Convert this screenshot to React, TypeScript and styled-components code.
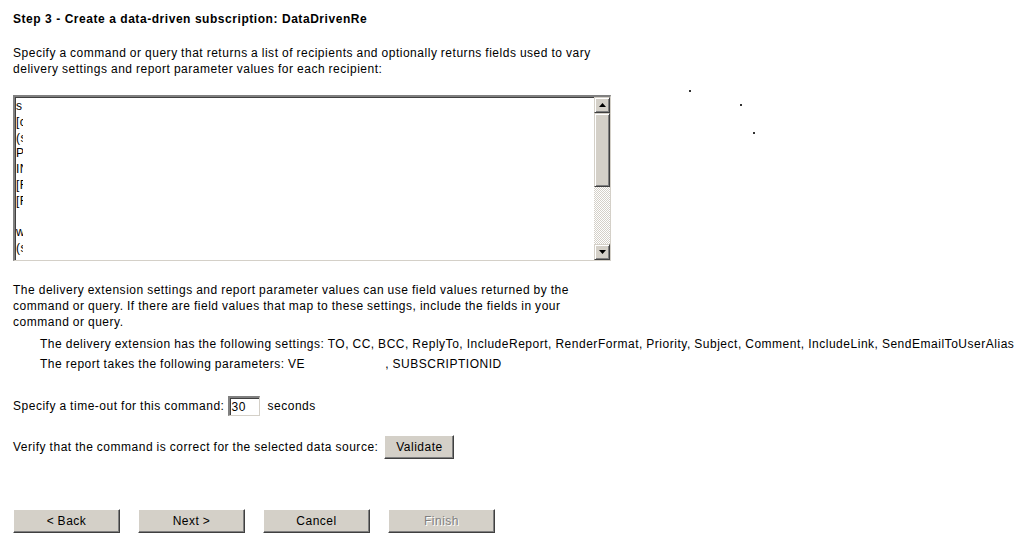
import styled, { createGlobalStyle } from "styled-components";

const GlobalStyle = createGlobalStyle`
  body {
    margin: 0;
    background: #ffffff;
    font-family: "Liberation Sans", Arial, sans-serif;
    font-size: 12px;
    letter-spacing: 0.52px;
    word-spacing: -0.4px;
    color: #000000;
  }
`;

const Page = styled.div`
  position: relative;
  width: 1026px;
  height: 538px;
  padding: 11px 0 0 13px;
  box-sizing: border-box;
  overflow: hidden;
`;

const Title = styled.h1`
  margin: 0;
  font-size: 12px;
  font-weight: bold;
  letter-spacing: 0.55px;
  word-spacing: 0;
  line-height: 16px;
`;

const Para = styled.p<{ $top: number }>`
  margin: ${(p) => p.$top}px 0 0;
  line-height: 16px;
  width: 590px;
`;

const QueryBox = styled.div`
  margin-top: 18px;
  width: 598px;
  height: 166px;
  box-sizing: border-box;
  border-style: solid;
  border-width: 2px 1px 1px 2px;
  border-color: #808080 #d4d0c8 #d4d0c8 #808080;
  box-shadow: inset 1px 1px 0 #404040;
  display: flex;
  background: #fff;
`;

const QueryText = styled.div`
  flex: 1;
  padding: 2px 0 0 1px;
  line-height: 15.8px;
`;

const QueryLine = styled.div`
  width: 7px;
  height: 15.8px;
  overflow: hidden;
  white-space: nowrap;
`;

const ScrollBar = styled.div`
  width: 16px;
  display: flex;
  flex-direction: column;
  background-color: #ffffff;
  background-image: repeating-conic-gradient(#d4d0c8 0 25%, #ffffff 0 50%);
  background-size: 2px 2px;
`;

const ScrollButton = styled.div`
  height: 16px;
  box-sizing: border-box;
  background: #d4d0c8;
  border-style: solid;
  border-width: 1px;
  border-color: #d4d0c8 #404040 #404040 #d4d0c8;
  box-shadow: inset 1px 1px 0 #ffffff, inset -1px -1px 0 #808080;
  display: flex;
  align-items: center;
  justify-content: center;
`;

const Thumb = styled(ScrollButton)`
  height: 74px;
`;

const Spacer = styled.div`
  flex: 1;
`;

const Indented = styled.div<{ $top: number }>`
  margin: ${(p) => p.$top}px 0 0 27px;
  line-height: 16px;
  white-space: nowrap;
`;

const Gap = styled.span`
  display: inline-block;
  width: 80px;
`;

const Row = styled.div<{ $top: number }>`
  margin-top: ${(p) => p.$top}px;
  display: flex;
  align-items: center;
  gap: 4px;
`;

const TimeoutInput = styled.div`
  width: 32px;
  height: 20px;
  box-sizing: border-box;
  border-style: solid;
  border-width: 2px 1px 1px 2px;
  border-color: #808080 #d4d0c8 #d4d0c8 #808080;
  box-shadow: inset 1px 1px 0 #404040;
  padding: 1px 0 0 1px;
  line-height: 16px;
  margin-right: 3px;
`;

const Button = styled.button<{ $width: number; $disabled?: boolean }>`
  width: ${(p) => p.$width}px;
  height: 24px;
  padding: 0;
  font-family: "Liberation Sans", Arial, sans-serif;
  font-size: 12px;
  letter-spacing: 0.52px;
  word-spacing: -0.4px;
  background: #d4d0c8;
  color: ${(p) => (p.$disabled ? "#808080" : "#000")};
  text-shadow: ${(p) => (p.$disabled ? "1px 1px 0 #ffffff" : "none")};
  border-style: solid;
  border-width: 1px;
  border-color: #ffffff #404040 #404040 #ffffff;
  box-shadow: inset -1px -1px 0 #808080;
  cursor: default;
`;

const Wizard = styled.div`
  margin-top: 50px;
  display: flex;
  gap: 18px;
`;

const Speck = styled.div<{ $x: number; $y: number }>`
  position: absolute;
  left: ${(p) => p.$x}px;
  top: ${(p) => p.$y}px;
  width: 2px;
  height: 2px;
  background: #333;
`;

const Arrow = ({ up }: { up?: boolean }) => (
  <svg width="7" height="4" viewBox="0 0 7 4">
    <polygon points={up ? "3.5,0 7,4 0,4" : "0,0 7,0 3.5,4"} fill="#000" />
  </svg>
);

const lines = ["s", "[c", "(s", "P", "IN", "[F", "[F", "", "w", "(s"];

export default function App() {
  return (
    <>
      <GlobalStyle />
      <Page>
        <Title>Step 3 - Create a data-driven subscription: DataDrivenRe</Title>
        <Para $top={18}>
          Specify a command or query that returns a list of recipients and optionally returns fields used to vary
          delivery settings and report parameter values for each recipient:
        </Para>
        <QueryBox>
          <QueryText>
            {lines.map((l, i) => (
              <QueryLine key={i}>{l || "\u00a0"}</QueryLine>
            ))}
          </QueryText>
          <ScrollBar>
            <ScrollButton>
              <Arrow up />
            </ScrollButton>
            <Thumb />
            <Spacer />
            <ScrollButton>
              <Arrow />
            </ScrollButton>
          </ScrollBar>
        </QueryBox>
        <Para $top={21}>
          The delivery extension settings and report parameter values can use field values returned by the
          command or query. If there are field values that map to these settings, include the fields in your
          command or query.
        </Para>
        <Indented $top={6}>
          The delivery extension has the following settings: TO, CC, BCC, ReplyTo, IncludeReport, RenderFormat,
          Priority, Subject, Comment, IncludeLink, SendEmailToUserAlias
        </Indented>
        <Indented $top={4}>
          The report takes the following parameters: VE<Gap />, SUBSCRIPTIONID
        </Indented>
        <Row $top={24}>
          Specify a time-out for this command:
          <TimeoutInput>30</TimeoutInput>
          seconds
        </Row>
        <Row $top={19}>
          Verify that the command is correct for the selected data source:
          <Button $width={70} style={{ marginLeft: 2 }}>
            Validate
          </Button>
        </Row>
        <Wizard>
          <Button $width={107}>&lt; Back</Button>
          <Button $width={107}>Next &gt;</Button>
          <Button $width={107}>Cancel</Button>
          <Button $width={107} $disabled>
            Finish
          </Button>
        </Wizard>
        <Speck $x={689} $y={90} />
        <Speck $x={740} $y={104} />
        <Speck $x={753} $y={132} />
      </Page>
    </>
  );
}
